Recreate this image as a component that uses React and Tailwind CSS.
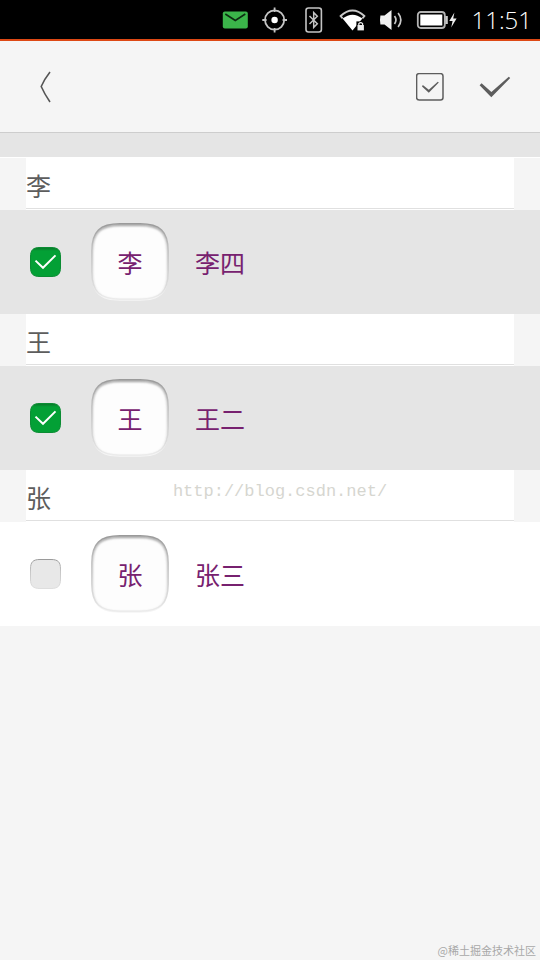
import { useState } from 'react';

const initialContacts = [
  { id: 1, section: '李', name: '李四', selected: true },
  { id: 2, section: '王', name: '王二', selected: true },
  { id: 3, section: '张', name: '张三', selected: false },
];

const StatusBar = () => (
  <div className="flex h-[41px] items-center justify-end border-b-2 border-[#dd4814] bg-black pr-2 text-white">
    {/* message */}
    <svg className="mr-3 h-[18px] w-[28px]" viewBox="0 0 28 18" fill="none">
      <rect x="0.8" y="0.5" width="25" height="17" rx="2" fill="#3bb44a" />
      <path d="M3.3 3 L13.3 9.5 L23.3 3" stroke="#0d2b11" strokeWidth="1.6" />
    </svg>
    {/* location */}
    <svg className="mr-[17px] h-[26px] w-[26px]" viewBox="0 0 26 26" fill="none" stroke="#c4c4c4" strokeWidth="1.8">
      <circle cx="12.6" cy="13" r="9.6" />
      <path d="M12.6 0.5 V5 M12.6 21 V25.5 M0.3 13 H4.6 M20.6 13 H25" />
      <circle cx="12.6" cy="13" r="3.2" fill="#fff" stroke="none" />
    </svg>
    {/* bluetooth */}
    <svg className="mr-4 h-[26px] w-[18px]" viewBox="0 0 18 26" fill="none" stroke="#c4c4c4" strokeWidth="1.6">
      <rect x="1" y="1" width="15.4" height="24" rx="2.5" />
      <path d="M4.5 9 L12.3 16.8 L8.7 20.4 V5.6 L12.3 9.2 L4.5 17" strokeWidth="1.5" />
    </svg>
    {/* wifi */}
    <svg className="mr-[13px] h-[24px] w-[27px]" viewBox="0 0 27 24" fill="none">
      <path d="M3.6 10.4 L1.6 8 Q13.5 -3 25.4 8 L23.4 10.4" stroke="#c9c9c9" strokeWidth="1.8" />
      <path d="M3.6 10.6 Q13.5 3 23.4 10.6 L13.5 22.5 Z" fill="#fff" />
      <rect x="17.4" y="13.4" width="8.6" height="9.6" fill="#000" />
      <rect x="18.5" y="17" width="6.4" height="5.4" fill="#ededed" />
      <path d="M19.8 17 V15.6 Q21.7 13.6 23.6 15.6 V17" stroke="#ededed" strokeWidth="1.2" />
    </svg>
    {/* volume */}
    <svg className="mr-3 h-[22px] w-[25px]" viewBox="0 0 25 22" fill="none">
      <path d="M1.4 6.5 Q0.6 11 1.4 15.5 H5.5 L12.5 21 V1 L5.5 6.5 Z" fill="#f0f0f0" />
      <path d="M15.5 7 Q18.4 11 15.5 15" stroke="#c9c9c9" strokeWidth="1.7" />
      <path d="M19.1 4 Q24.6 11 19.1 18" stroke="#c9c9c9" strokeWidth="1.7" />
    </svg>
    {/* battery */}
    <svg className="mr-[14px] h-[18px] w-[41px]" viewBox="0 0 41 18" fill="none">
      <rect x="1.8" y="1" width="27" height="16" rx="3" stroke="#b4b4b4" strokeWidth="1.8" />
      <rect x="4.3" y="3.5" width="22" height="11" fill="#fff" />
      <rect x="29.3" y="5" width="2.5" height="8" fill="#c9c9c9" />
      <path d="M38.4 1.5 L33.3 10 H36.6 L35.2 16.5 L40.6 7.4 H37.2 Z" fill="#ededed" />
    </svg>
    <time className="font-['Open_Sans',sans-serif] text-2xl leading-8 font-light">11:51</time>
  </div>
);

const Header = () => (
  <header className="flex h-[92px] items-center border-b border-[#cdcdcd] pr-[25px] pl-8">
    <button type="button" aria-label="Back" className="px-2 py-2">
      <svg className="h-8 w-[12px]" viewBox="0 0 12 32" fill="none" stroke="#555" strokeWidth="1.6">
        <path d="M10 1 Q4.5 8 1.2 15.5 Q4.5 23 10 31" />
      </svg>
    </button>
    <button type="button" aria-label="Select all" className="ml-auto p-1">
      <svg className="h-7 w-7" viewBox="0 0 28 28" fill="none">
        <rect x="0.6" y="0.6" width="26.4" height="26.4" rx="2.5" stroke="#5d5d5d" strokeWidth="1.5" />
        <path d="M6.8 12 L6 13.4 L12.8 19.7 L22.8 9.4 L21.8 8.7 L12.8 16.7 Z" fill="#5d5d5d" />
      </svg>
    </button>
    <button type="button" aria-label="Done" className="ml-[27px] p-1">
      <svg className="h-[22px] w-8" viewBox="0 0 32 22" fill="#5d5d5d">
        <path d="M2.6 7.2 L0.6 9.2 L12.3 21.2 L31.2 2.1 L29.8 0.8 L12.4 16 Z" />
      </svg>
    </button>
  </header>
);

const SelectBox = ({ label, checked, onChange }) => (
  <span className="grid h-[31px] w-[31px] shrink-0">
    <input
      type="checkbox"
      aria-label={label}
      checked={checked}
      onChange={onChange}
      className="col-start-1 row-start-1 h-full w-full cursor-pointer appearance-none"
    />
    <svg className="pointer-events-none col-start-1 row-start-1 h-full w-full" viewBox="0 0 31 31" fill="none">
      <defs>
        <linearGradient id="box-on" x1="0" y1="0" x2="0" y2="1">
          <stop offset="0" stopColor="#0a7428" />
          <stop offset="0.12" stopColor="#03a035" />
          <stop offset="1" stopColor="#03a035" />
        </linearGradient>
        <linearGradient id="box-off" x1="0" y1="0" x2="0" y2="1">
          <stop offset="0" stopColor="#9a9a9a" />
          <stop offset="0.4" stopColor="#c6c6c6" />
          <stop offset="1" stopColor="#dedede" />
        </linearGradient>
      </defs>
      <path
        d="M10 0.5 H21 C28 0.5 30.5 3 30.5 10 V20 C30.5 27 28 29.5 21 29.5 H10 C3 29.5 0.5 27 0.5 20 V10 C0.5 3 3 0.5 10 0.5 Z"
        fill={checked ? 'url(#box-on)' : '#e8e8e8'}
        stroke={checked ? '#0b8c33' : 'url(#box-off)'}
        strokeWidth="1"
      />
      {checked ? <path d="M5.5 13.6 L13 20.8 L25.5 8.4" stroke="#fff" strokeWidth="2" /> : null}
    </svg>
  </span>
);

const squircle =
  'M29 0.8 H49 C69 0.8 77.2 8 77.2 28 V49 C77.2 69 69 76.2 49 76.2 H29 C9 76.2 0.8 69 0.8 49 V28 C0.8 8 9 0.8 29 0.8 Z';

const Avatar = ({ text }) => (
  <span className="grid h-[78px] w-[78px] shrink-0 place-items-center">
    <svg className="col-start-1 row-start-1 h-full w-full" viewBox="0 0 78 78" fill="none" aria-hidden="true">
      <defs>
        <linearGradient id="rim" x1="0" y1="0" x2="0" y2="1">
          <stop offset="0" stopColor="#9a9a9a" />
          <stop offset="0.3" stopColor="#c0c0c0" />
          <stop offset="0.8" stopColor="#dadada" />
          <stop offset="1" stopColor="#ececec" />
        </linearGradient>
        <filter id="soft" x="-10%" y="-10%" width="120%" height="120%">
          <feGaussianBlur stdDeviation="1.2" />
        </filter>
        <clipPath id="tile">
          <path d={squircle} />
        </clipPath>
      </defs>
      <path d={squircle} fill="#f5f5f5" transform="translate(0 1.6)" />
      <path d={squircle} fill="#fdfdfd" />
      <g clipPath="url(#tile)">
        <path d={squircle} stroke="url(#rim)" strokeWidth="2.4" filter="url(#soft)" transform="translate(0 1)" />
      </g>
      <path d={squircle} stroke="url(#rim)" strokeWidth="1.4" />
    </svg>
    <span className="z-10 col-start-1 row-start-1">{text}</span>
  </span>
);

export default function App() {
  const [contacts, setContacts] = useState(initialContacts);

  const toggle = (id) => {
    setContacts((list) => list.map((c) => (c.id === id ? { ...c, selected: !c.selected } : c)));
  };

  return (
    <div className="relative min-h-screen bg-[#f5f5f5] font-['Noto_Sans_CJK_SC',sans-serif] text-[25px] leading-8">
      <StatusBar />
      <Header />
      <main>
        <div className="box-content h-6 border-b border-white bg-[#e5e5e5]" />
        {contacts.map((c) => (
          <section key={c.id}>
            <div className="h-[52px] px-[26px]">
              <div className="h-full bg-white pb-px">
                <h2 className="flex h-full items-center border-b border-[#e0e0e0] pt-[3px] text-[#5d5d5d]">
                  {c.section}
                </h2>
              </div>
            </div>
            <div
              className={`flex h-[104px] items-center pl-[30px] text-[#77216f] ${c.selected ? 'bg-[#e5e5e5]' : 'bg-white'}`}
            >
              <SelectBox label={c.name} checked={c.selected} onChange={() => toggle(c.id)} />
              <div className="ml-[30px] flex items-center gap-[26px]">
                <Avatar text={c.section} />
                <span>{c.name}</span>
              </div>
            </div>
          </section>
        ))}
      </main>
      <p className="pointer-events-none absolute inset-x-0 top-[480px] pl-5 text-center font-['Liberation_Mono',monospace] text-[17px] leading-6 text-[#d6d6d0]">
        http://blog.csdn.net/
      </p>
      <p className="absolute right-1 bottom-0 text-[11px] leading-5 text-[#a8a8a8]">@稀土掘金技术社区</p>
    </div>
  );
}
